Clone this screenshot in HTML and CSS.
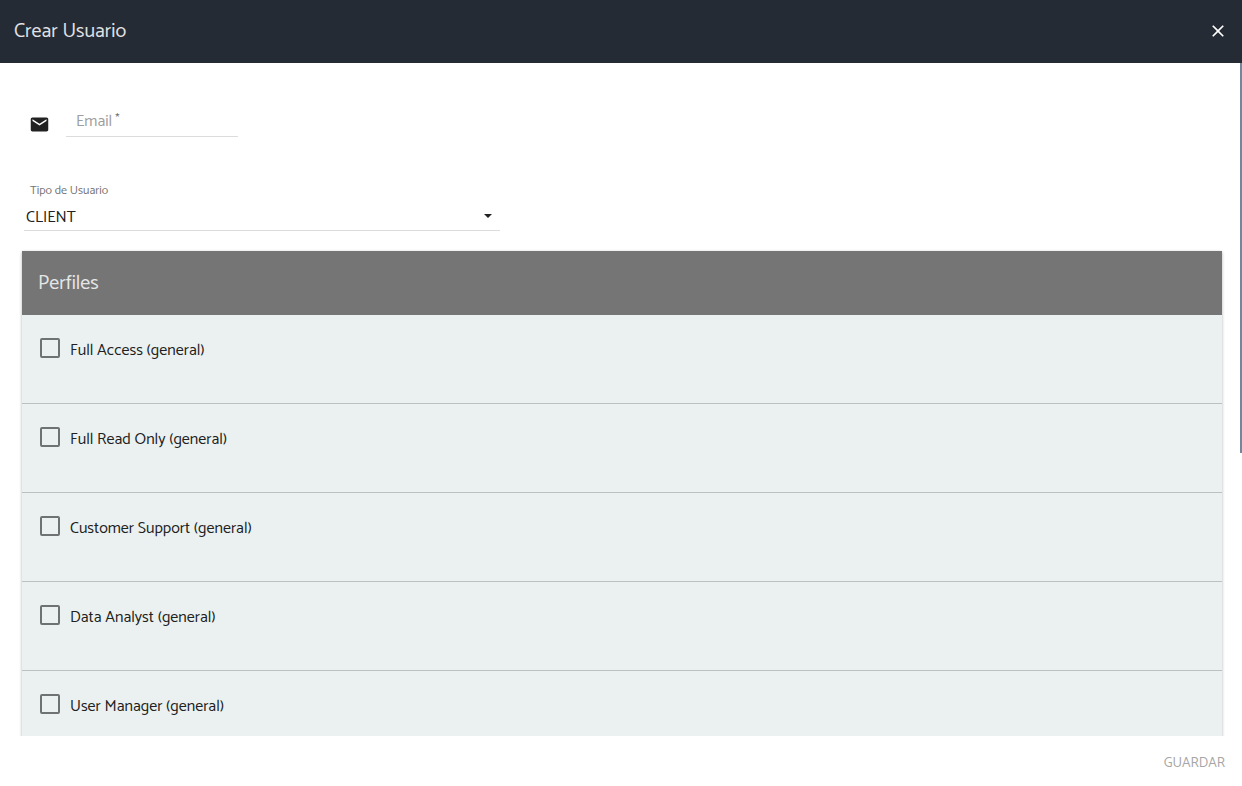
FILE: index.html
```html
<!DOCTYPE html>
<html lang="es">
<head>
<meta charset="utf-8">
<meta name="viewport" content="width=device-width, initial-scale=1">
<title>Crear Usuario</title>
<link rel="stylesheet" href="styles.css">
</head>
<body>
<form class="dialog">
  <header class="toolbar">
    <h1 class="title">Crear Usuario</h1>
    <button class="close" type="button" aria-label="Cerrar">
      <svg width="20" height="20" viewBox="0 0 24 24" aria-hidden="true"><path fill="currentColor" d="M19 6.4 17.6 5 12 10.600 6.400 5 5 6.400 10.600 12 5 17.600 6.400 19 12 13.400 17.600 19 19 17.600 13.400 12z"/></svg>
    </button>
  </header>
  <div class="body">
    <main class="content">
      <div class="email-row">
        <svg class="mail" width="21" height="21" viewBox="0 0 24 24" aria-hidden="true"><path fill="currentColor" d="M20 4H4c-1.100 0-2 .9-2 2v12c0 1.100.9 2 2 2h16c1.100 0 2-.9 2-2V6c0-1.100-.9-2-2-2zm0 4-8 5-8-5V6l8 5 8-5v2z"/></svg>
        <div class="field">
          <label class="email-label" for="email">Email<span class="star">*</span></label>
          <input class="email" id="email" type="email" required>
        </div>
      </div>
      <div class="type">
        <label class="type-label" for="type">Tipo de Usuario</label>
        <div class="select-box">
          <select class="select" id="type"><option>CLIENT</option></select>
          <svg class="arrow" width="8" height="4" viewBox="0 0 8 4" aria-hidden="true"><path fill="currentColor" d="M0 0h8L4 4z"/></svg>
        </div>
      </div>
      <section class="card">
        <h2 class="card-title">Perfiles</h2>
        <ul class="profiles">
          <li class="profile"><label class="option"><input class="check" type="checkbox">Full Access (general)</label></li>
          <li class="profile"><label class="option"><input class="check" type="checkbox">Full Read Only (general)</label></li>
          <li class="profile"><label class="option"><input class="check" type="checkbox">Customer Support (general)</label></li>
          <li class="profile"><label class="option"><input class="check" type="checkbox">Data Analyst (general)</label></li>
          <li class="profile"><label class="option"><input class="check" type="checkbox">User Manager (general)</label></li>
        </ul>
      </section>
    </main>
    <div class="thumb"></div>
  </div>
  <footer class="actions"><button class="save" type="submit" disabled>GUARDAR</button></footer>
</form>
</body>
</html>
```
FILE: styles.css
```css
* { box-sizing: border-box; }
body {
  margin: 0;
  background: #fff;
  color: #212121;
  font: 16px/24px Catamaran, Lato, sans-serif;
}
button, input, select { font: inherit; color: inherit; }
.dialog { display: flex; flex-direction: column; height: 100vh; }
.toolbar {
  flex: none;
  display: flex;
  align-items: center;
  justify-content: space-between;
  height: 63px;
  padding: 0 14px;
  background: #252b35;
  color: #e0e1e3;
}
.title, .card-title { margin: 0; font-size: 20px; font-weight: 400; }
.close { display: flex; margin-bottom: 2px; padding: 0; border: 0; background: none; color: #fff; }
.body { position: relative; flex: 1; min-height: 0; }
.content {
  height: 100%;
  padding: 40px 20px 20px 22px;
  overflow-y: auto;
  scrollbar-width: none;
}
.thumb {
  position: absolute;
  top: 0;
  right: 0;
  width: 2px;
  height: 58%;
  background: #73879a;
}
.email-row { display: flex; align-items: center; gap: 16px; padding: 4px 0 0 7px; }
.mail { margin-top: 4px; }
.field { display: grid; width: 172px; }
.email-label, .email { grid-area: 1 / 1; }
.email-label { padding: 3px 10px; color: #9e9e9e; }
.star { margin-left: 3px; font-size: 12px; vertical-align: 4px; line-height: 1; color: #757575; }
.email {
  width: 100%;
  height: 30px;
  padding: 0 10px;
  border: 0;
  border-bottom: 1px solid #dcdcdc;
  background: none;
}
.type { width: 478px; max-width: 100%; margin-top: 44px; padding-left: 2px; }
.type-label {
  display: block;
  padding-left: 6px;
  color: #757575;
  font-size: 12px;
  line-height: 20px;
}
.select-box { display: grid; align-items: center; border-bottom: 1px solid #dcdcdc; }
.select, .arrow { grid-area: 1 / 1; }
.select {
  appearance: none;
  width: 100%;
  height: 29px;
  padding: 4px 2px 0;
  border: 0;
  background: none;
}
.arrow { justify-self: end; margin-right: 8px; }
.card { margin-top: 20px; box-shadow: 0 1px 3px rgba(0, 0, 0, .3); }
.card-title {
  padding: 21px 16px 19px;
  background: #757575;
  color: #e6e6e6;
}
.profiles { margin: 0; padding: 0; list-style: none; background: #ebf1f1; }
.profile { height: 89px; padding: 22px 18px; border-bottom: 1px solid #bcc0c0; }
.option { display: inline-flex; align-items: flex-start; gap: 10px; line-height: 28px; }
.check {
  appearance: none;
  width: 20px;
  height: 20px;
  margin: 1px 0 0;
  border: 2px solid #6f7272;
  border-radius: 2px;
}
.actions {
  flex: none;
  display: flex;
  align-items: center;
  justify-content: flex-end;
  height: 50px;
  padding: 6px 17px 0;
}
.save { padding: 0; border: 0; background: none; color: #a6a6a6; font-size: 14px; }
```
